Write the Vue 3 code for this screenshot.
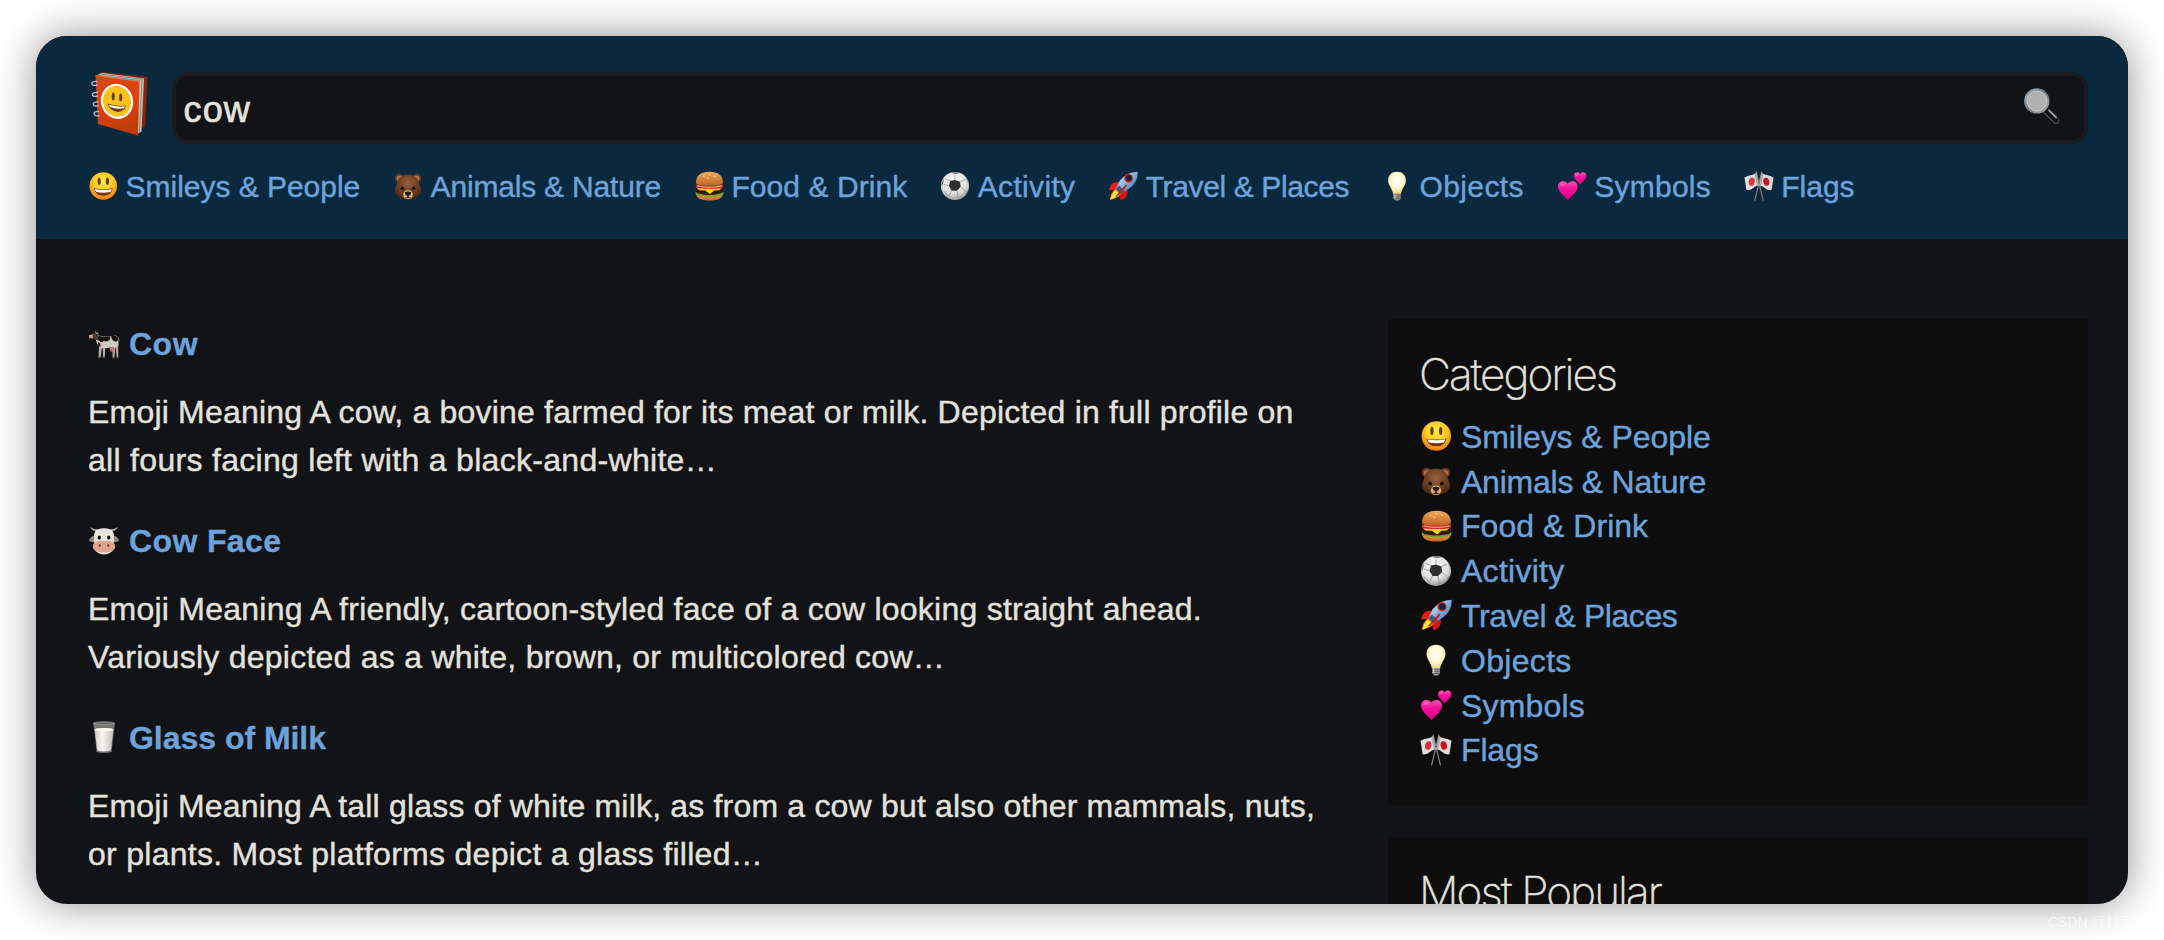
<script setup>
const categories = [
  { icon: 'smiley', label: 'Smileys & People', width: 234.6 },
  { icon: 'bear', label: 'Animals & Nature', width: 230.4 },
  { icon: 'burger', label: 'Food & Drink', width: 176 },
  { icon: 'ball', label: 'Activity', width: 97.6 },
  { icon: 'rocket', label: 'Travel & Places', width: 203.4 },
  { icon: 'bulb', label: 'Objects', width: 104.3 },
  { icon: 'hearts', label: 'Symbols', width: 116.7 },
  { icon: 'flags', label: 'Flags', width: 73.2 },
]

const results = [
  {
    icon: 'cow',
    title: 'Cow',
    width: 69,
    lines: [
      { text: 'Emoji Meaning A cow, a bovine farmed for its meat or milk. Depicted in full profile on', width: 1205.5 },
      { text: 'all fours facing left with a black-and-white…', width: 629 },
    ],
  },
  {
    icon: 'cowface',
    title: 'Cow Face',
    width: 152.4,
    lines: [
      { text: 'Emoji Meaning A friendly, cartoon-styled face of a cow looking straight ahead.', width: 1114 },
      { text: 'Variously depicted as a white, brown, or multicolored cow…', width: 857 },
    ],
  },
  {
    icon: 'milk',
    title: 'Glass of Milk',
    width: 197,
    lines: [
      { text: 'Emoji Meaning A tall glass of white milk, as from a cow but also other mammals, nuts,', width: 1227 },
      { text: 'or plants. Most platforms depict a glass filled…', width: 675 },
    ],
  },
]

// Tracks a line of text so that it takes exactly the given width.
const vFit = {
  mounted(el, { value }) {
    const natural = el.getBoundingClientRect().width
    el.style.letterSpacing = (value - natural) / el.textContent.length + 'px'
  },
}
</script>

<template>
  <div class="page">
    <svg class="sprite" aria-hidden="true">
      <defs>
        <radialGradient id="g-smile" cx=".5" cy=".35" r=".65">
          <stop offset="0" stop-color="#fff04a" />
          <stop offset=".55" stop-color="#fdc927" />
          <stop offset="1" stop-color="#ee7a0e" />
        </radialGradient>
        <radialGradient id="g-bear" cx=".5" cy=".35" r=".65">
          <stop offset="0" stop-color="#95603c" />
          <stop offset=".6" stop-color="#6c3f22" />
          <stop offset="1" stop-color="#48260f" />
        </radialGradient>
        <linearGradient id="g-bun" x1="0" y1="0" x2="0" y2="1">
          <stop offset="0" stop-color="#f5a95c" />
          <stop offset="1" stop-color="#bf6425" />
        </linearGradient>
        <radialGradient id="g-ball" cx=".45" cy=".3" r=".75">
          <stop offset="0" stop-color="#ffffff" />
          <stop offset=".65" stop-color="#dcdcdc" />
          <stop offset="1" stop-color="#8c8c8c" />
        </radialGradient>
        <linearGradient id="g-rocket" x1="0" y1="0" x2="1" y2="1">
          <stop offset="0" stop-color="#f3f8fc" />
          <stop offset=".5" stop-color="#7fb1df" />
          <stop offset="1" stop-color="#28588f" />
        </linearGradient>
        <radialGradient id="g-bulb" cx=".5" cy=".4" r=".6">
          <stop offset="0" stop-color="#ffffff" />
          <stop offset=".55" stop-color="#fff8d4" />
          <stop offset="1" stop-color="#ecd27c" />
        </radialGradient>
        <linearGradient id="g-heart" x1="0" y1="0" x2="0" y2="1">
          <stop offset="0" stop-color="#ff4db4" />
          <stop offset=".4" stop-color="#f5109a" />
          <stop offset="1" stop-color="#d8007e" />
        </linearGradient>
        <linearGradient id="g-milk" x1="0" y1="0" x2="1" y2="0">
          <stop offset="0" stop-color="#cfcbc1" />
          <stop offset=".4" stop-color="#f8f6f0" />
          <stop offset="1" stop-color="#c3beb2" />
        </linearGradient>
        <linearGradient id="g-cover" x1="0" y1="0" x2=".2" y2="1">
          <stop offset="0" stop-color="#d04a12" />
          <stop offset=".5" stop-color="#e0430a" />
          <stop offset="1" stop-color="#c03c07" />
        </linearGradient>
        <linearGradient id="g-rim" x1="0" y1="0" x2="1" y2="1">
          <stop offset="0" stop-color="#8fa9c4" />
          <stop offset=".5" stop-color="#777b80" />
          <stop offset="1" stop-color="#a9a9a9" />
        </linearGradient>
      </defs>

      <symbol id="smiley" viewBox="0 0 32 32">
        <circle cx="16.3" cy="16" r="14.7" fill="url(#g-smile)" />
        <ellipse cx="11.9" cy="11" rx="1.7" ry="4" fill="#6e3a0b" />
        <ellipse cx="20.7" cy="11" rx="1.7" ry="4" fill="#6e3a0b" />
        <path d="M6.3 18.4Q16.3 20.8 26.3 18.4Q25.3 26.3 16.3 26.3T6.3 18.4Z" fill="#70350c" />
        <path d="M7.3 19.2Q16.3 21.5 25.3 19.2Q24.8 21.6 23.8 22.4Q16.3 24 8.8 22.4Q7.7 21.4 7.3 19.2Z" fill="#fff" />
      </symbol>

      <symbol id="bear" viewBox="0 0 32 32">
        <circle cx="6.6" cy="7.6" r="4.8" fill="#6a3e24" />
        <circle cx="25.4" cy="7.6" r="4.8" fill="#6a3e24" />
        <circle cx="7" cy="8" r="3" fill="#b1735a" />
        <circle cx="25" cy="8" r="3" fill="#b1735a" />
        <path d="M16 3.6C23 3.6 27.6 8 28 14Q30.6 18 30 22Q29 27 22.5 28.5Q19 30.6 16 30.6T9.5 28.5Q3 27 2 22Q1.4 18 4 14C4.4 8 9 3.6 16 3.6Z" fill="url(#g-bear)" />
        <circle cx="10" cy="18.5" r="1.9" fill="#160d08" />
        <circle cx="22" cy="18.5" r="1.9" fill="#160d08" />
        <path d="M16 20.5Q20.7 20.5 21.2 25.3Q21 30 16 30T10.8 25.3Q11.3 20.5 16 20.5Z" fill="#dcad6c" />
        <path d="M12.4 22.8Q16 20.7 19.6 22.8Q19 25.7 16.7 26.3V27.5L20 29Q16 29 12 29L15.3 27.5V26.3Q13 25.7 12.4 22.8Z" fill="#15100d" />
      </symbol>

      <symbol id="burger" viewBox="0 0 32 32">
        <path d="M2.5 23.5H30.5Q31 31.5 16.5 31.5T2.5 23.5Z" fill="url(#g-bun)" />
        <path d="M1.5 22Q16.5 26 31.5 22L31 25.5Q27.5 27.5 25 26Q21.5 28.5 17.5 27Q13.5 28.5 10 26.3Q5.5 27.5 2 25Z" fill="#74a51c" />
        <path d="M2 18.5H31Q32 24.5 25.5 24.5Q16.5 26.5 7.5 24.5Q.5 24.5 2 18.5Z" fill="#34170c" />
        <path d="M2.5 17.5H30.5L26.5 20.5L21.5 20.8L17 24.5L12 20.8L5.5 20.5Z" fill="#ffd321" />
        <path d="M2 14.5H31Q31.8 18 28.5 18.4Q16.5 19.6 4.5 18.4Q1 18 2 14.5Z" fill="#d3281c" />
        <path d="M3.5 15.2Q16.5 18.4 29.5 15.2V16.5Q16.5 19 3.5 16.5Z" fill="#f4b0a0" />
        <path d="M2 12.5Q2.5 .8 16.5 .8T31 12.5Q31 15.3 16.5 15.5T2 12.5Z" fill="url(#g-bun)" />
        <g fill="#ffdba6">
          <ellipse cx="10.5" cy="5.5" rx="1" ry=".6" />
          <ellipse cx="16.5" cy="3.8" rx="1" ry=".6" />
          <ellipse cx="22" cy="5.5" rx="1" ry=".6" />
          <ellipse cx="14.5" cy="7.5" rx="1" ry=".6" />
        </g>
      </symbol>

      <symbol id="ball" viewBox="0 0 32 32">
        <circle cx="16" cy="16" r="15" fill="url(#g-ball)" />
        <path d="M11 10.5L16 9.5L21.5 11.5L22 17L18 21H12.5L9.500 16Z" fill="#2e2f31" />
        <path d="M12 1.6L17.5 1L21.5 2.2L17.5 3.2L13.5 2.6ZM1.2 13.5L3.5 9L4.3 8.5L3.2 13.5L1.6 17ZM28 7L31 14.5L29.7 12.5L27.8 8ZM30.2 20.5L27.5 25.5L26.3 26L28.4 21.5Z" fill="#77797c" />
        <path d="M16 9.5L15.8 4M21.5 11.5L27 9M22 17L27 21.5M18 21L19.5 29M12.5 21L9.5 27M9.5 16L4 14M11 10.5L5.5 8.5M9.5 27L4 21.5M24.5 26.5L19.5 29" fill="none" stroke="#8d8d8d" stroke-width=".8" />
      </symbol>

      <symbol id="rocket" viewBox="0 0 32 32">
        <path d="M1 20.5Q3 12.5 8 12L14 11.5L10 19.5Z" fill="#ec1e12" />
        <path d="M20 18L21 22Q21 29 14 31L12.5 30L13 23Z" fill="#d3150f" />
        <path d="M8 19L14 24.5Q12 28 2 31Q2.5 23 8 19Z" fill="#ff7a14" />
        <path d="M8 20.5L12 24.5Q9.5 28 2.5 30.5Q4 24 8 20.5Z" fill="#ffec3b" />
        <path d="M31.5 .8Q32.5 11 23.5 18L14 24.5L8.5 19L12.5 10.5Q19.5 1.5 31.5 .8Z" fill="url(#g-rocket)" />
        <path d="M8.5 19L12 15.5L17.5 21.5L14 24.5Z" fill="#315a89" />
        <path d="M19 14.5L7.5 27.5L9.5 27Q17 22 20.5 15Z" fill="#d2180f" />
        <circle cx="22" cy="7.8" r="4.6" fill="#d31d1c" />
        <circle cx="22.2" cy="7.5" r="3.2" fill="#162235" />
      </symbol>

      <symbol id="bulb" viewBox="0 0 32 32">
        <path d="M16 .8C21.8 .8 25.5 4.5 25.5 10C25.5 15 20.5 19.5 20.2 24.5H11.8C11.5 19.5 6.5 15 6.5 10C6.5 4.5 10.2 .8 16 .8Z" fill="url(#g-bulb)" />
        <path d="M12 24H20V29L18 31.5H14L12 29Z" fill="#9b9890" />
        <path d="M12 25.5H20M12 27.5H20M13 29.5H19" stroke="#595753" stroke-width=".8" />
        <path d="M13.8 24.3V29" stroke="#e2dfd6" stroke-width="1" />
      </symbol>

      <symbol id="hearts" viewBox="0 0 32 32">
        <path d="M11.500 31C7 26 1 22 1 16.5C1 10.5 8.5 9 11.5 13.5C14.5 9 22 10.500 22 16.5C22 22 16 26 11.5 31Z" fill="url(#g-heart)" />
        <path d="M24.8 14.5C22 11 18 8.8 18 5C18 1 23 .2 24.8 3.4C26.6 .2 31.3 1 31.3 5C31.3 8.8 27.5 11 24.8 14.5Z" fill="url(#g-heart)" />
        <ellipse cx="6" cy="14.5" rx="2.6" ry="1.5" fill="#ff8fd0" opacity=".5" />
        <ellipse cx="21" cy="3.8" rx="1.6" ry=".9" fill="#ff8fd0" opacity=".5" />
      </symbol>

      <symbol id="flags" viewBox="0 0 32 32">
        <path d="M13 .5L20.5 31.5M19 .5L11.5 31.5" stroke="#85837e" stroke-width="1.2" />
        <path d="M.5 6.8Q4 4.8 7 4.5T13.2 2L15.6 15.2Q12 15.8 9.5 18.3T2.6 20.3Z" fill="#e0dfdd" />
        <path d="M31.5 6.8Q28 4.8 25 4.5T18.8 2L16.4 15.2Q20 15.8 22.5 18.3T29.4 20.3Z" fill="#dcdbd9" />
        <path d="M13.2 2L15.6 15.2L13.8 15.8L11.2 3.5ZM18.8 2L16.4 15.2L18.2 15.8L20.8 3.5Z" fill="#9c9a97" opacity=".7" />
        <ellipse cx="8.2" cy="11.5" rx="3.1" ry="4.3" transform="rotate(14 8.2 11.5)" fill="#d8323a" />
        <ellipse cx="23.8" cy="11.5" rx="3.1" ry="4.3" transform="rotate(-14 23.8 11.5)" fill="#c4111f" />
      </symbol>

      <symbol id="cow" viewBox="0 0 32 32">
        <path d="M28.5 9Q31 9.5 30.8 14L30 20" fill="none" stroke="#6f6863" stroke-width="1" />
        <path d="M11 20L10.5 30.5H12.6L14 20ZM14.7 20L15 30.5H16.8L17.3 20ZM24.2 19L24.7 30.5H26.5L27.2 19ZM27.3 18L28.8 31H30.3L30.1 17Z" fill="#b5aea6" />
        <path d="M9 8Q18 11 28 8.5Q31 11 29.8 19Q27 21.5 24 20Q18 22 12.5 21Q8.5 17 7.5 11.5Z" fill="#cfc9c0" />
        <path d="M7.5 8Q17 11 22.5 9.5L22 12.5Q18 16 16 13.500Q13 17 11 13.5L8 12ZM23.5 9Q30 8 30 12.5Q29 16 26 14Q23 12.5 23.5 9ZM10 15Q13 16 12.5 20Q9.5 18.5 10 15Z" fill="#17130f" />
        <path d="M5.5 6L10.5 7.5L10 13.5L6.5 12L1.2 10.7L1 8.5Z" fill="#4a3d36" />
        <path d="M1 8.3L4.5 7.5L5 11.3L1.5 11Z" fill="#d1aca0" />
        <path d="M7 3.5Q6.3 5.5 8 6.5L10.5 7.5L10 5.5L8 5.5Z" fill="#b7a896" />
        <path d="M21.5 20H26L25.5 24Q23.5 25.5 22 23.5Z" fill="#c77472" />
        <path d="M10.5 29.5H12.8V31H10.2ZM14.8 29.5H16.9V31H14.6ZM24.5 30H26.7V31.5H24.3ZM28.6 30H30.4V31.5H28.4Z" fill="#5c5149" />
      </symbol>

      <symbol id="cowface" viewBox="0 0 32 32">
        <path d="M2.5 3Q4 7.6 10 7.3L12 5.5Q6 6 2.5 3ZM29.5 3Q28 7.6 22 7.3L20 5.5Q26 6 29.5 3Z" fill="#b9b5ad" />
        <path d="M7.5 11Q2.5 12 .8 16.8Q4 19 8.5 17.5ZM24.5 11Q29.5 12 31.2 16.8Q28 19 23.5 17.5Z" fill="#958c80" />
        <path d="M16 4.2Q24.5 3.8 26 10.5L25.8 19L24.5 27Q20.5 30.6 16 30.6T7.5 27L6.2 19L6 10.5Q7.5 3.8 16 4.2Z" fill="#e9e5da" />
        <path d="M16 17Q25.5 16 27.2 21.5Q27.7 27 21 27.7Q16 28.7 11 27.7Q4.3 27 4.8 21.5Q6.5 16 16 17Z" fill="#dfa58e" />
        <ellipse cx="11.3" cy="13.6" rx="1.7" ry="2.1" fill="#17130f" />
        <ellipse cx="20.7" cy="13.6" rx="1.7" ry="2.1" fill="#17130f" />
        <ellipse cx="11.8" cy="21.5" rx="1" ry="1.2" fill="#69372b" />
        <ellipse cx="20.2" cy="21.5" rx="1" ry="1.2" fill="#69372b" />
      </symbol>

      <symbol id="milk" viewBox="0 0 32 32">
        <path d="M5.3 2L8.7 31Q16 33 23.5 31L26.9 2Z" fill="#777673" />
        <path d="M6.8 8.5H25.3L22.8 29.5Q16 31.3 9.2 29.5Z" fill="url(#g-milk)" />
        <ellipse cx="16" cy="8.5" rx="9.3" ry="1.6" fill="#fffdf8" />
        <ellipse cx="16" cy="2.3" rx="10.8" ry="1.5" fill="#6a6a69" stroke="#a5a4a1" stroke-width=".7" />
      </symbol>
    </svg>

    <div class="window">
      <header class="header">
        <div class="top">
          <svg class="logo" viewBox="88 68 64 72" aria-label="Emojipedia">
            <path d="M97 74L103 72L147.5 77L145 127L141 128Z" fill="#8e2407" />
            <path d="M98 75L102 73L144 78.5L141.5 131.5L137 134Z" fill="#c4c3c1" />
            <path d="M99 75.5L140 80.5M101 74.2L143 79.3" stroke="#77706b" stroke-width=".7" />
            <path d="M142 80L139.5 132" stroke="#858585" stroke-width="1" />
            <path d="M95.5 75.5L139.5 81.5L138 135.5L98 124Z" fill="url(#g-cover)" />
            <path d="M95.5 75.5L139.5 81.5" stroke="#f26a34" stroke-width="1" />
            <ellipse cx="117" cy="101.3" rx="17.5" ry="19" fill="#ff2506" opacity=".55" />
            <ellipse cx="117" cy="101.3" rx="15" ry="16.6" transform="rotate(-15 117 101.3)" fill="#fbc21a" stroke="#fff" stroke-width="2.2" />
            <ellipse cx="113.2" cy="96.5" rx="1.5" ry="4" fill="#6b3910" />
            <ellipse cx="120.7" cy="97.5" rx="1.5" ry="4" fill="#6b3910" />
            <path d="M107.5 103.5Q116 107 126 105.5Q124.5 112 117.5 112Q109.5 111 107.5 103.5Z" fill="#70390d" />
            <path d="M108.5 104.5Q116 107.5 125 106.3L124 108.3Q116 109.5 110 107Z" fill="#fff" />
            <g fill="none" stroke="#b8b8dd" stroke-width="1.3">
              <path d="M97.5 81.5Q91.5 81 91.7 83.6T97.5 85" />
              <path d="M98 92.5Q92.2 92 92.4 94.6T98 96" />
              <path d="M98.5 102Q93 101.5 93.2 104.1T98.8 105.7" />
              <path d="M99 111.5Q93.8 111.2 94 113.7T99.5 116" />
            </g>
          </svg>
          <div class="search">
            <span v-fit="67.5" class="query">cow</span>
            <svg class="magnifier" viewBox="0 0 36 36">
              <path d="M22 22.5L32 32.5" stroke="#4a5056" stroke-width="6.8" stroke-linecap="round" />
              <path d="M22.5 22.5L32 32" stroke="#0b0c0e" stroke-width="5" stroke-linecap="round" />
              <path d="M25 22.5L32 29.5" stroke="#8e979d" stroke-width="1.8" stroke-linecap="round" />
              <circle cx="12.8" cy="12.9" r="11.6" fill="#b0b0b0" stroke="url(#g-rim)" stroke-width="2.2" />
              <circle cx="12.8" cy="12.9" r="10" fill="none" stroke="#d0d0d0" stroke-width=".8" />
            </svg>
          </div>
        </div>
        <nav class="nav">
          <a v-for="c in categories" :key="c.icon" class="nav-item">
            <svg class="icon icon-small"><use :href="'#' + c.icon" /></svg>
            <span v-fit="c.width">{{ c.label }}</span>
          </a>
        </nav>
      </header>

      <main class="main">
        <section class="results">
          <article v-for="r in results" :key="r.icon" class="result">
            <h2 class="result-title">
              <svg class="icon"><use :href="'#' + r.icon" /></svg>
              <span v-fit="r.width">{{ r.title }}</span>
            </h2>
            <p class="result-text">
              <span v-for="line in r.lines" :key="line.text" v-fit="line.width" class="line">{{ line.text }}</span>
            </p>
          </article>
        </section>

        <aside class="sidebar">
          <div class="panel">
            <h3 class="panel-title"><span v-fit="197">Categories</span></h3>
            <ul class="list">
              <li v-for="c in categories" :key="c.icon" class="list-item">
                <svg class="icon"><use :href="'#' + c.icon" /></svg>
                <span v-fit="c.width * 32 / 30 - 0.6">{{ c.label }}</span>
              </li>
            </ul>
          </div>
          <div class="panel">
            <h3 class="panel-title"><span v-fit="242">Most Popular</span></h3>
          </div>
        </aside>
      </main>
    </div>
    <div class="watermark">CSDN @村雨遥</div>
  </div>
</template>

<style>
body {
  background: #fff;
  overflow: hidden;
}
</style>

<style scoped>
.page {
  position: relative;
  box-sizing: border-box;
  width: 2164px;
  height: 940px;
  padding: 36px;
  overflow: hidden;
  background: #fff;
  font-family: "Liberation Sans", "Noto Sans CJK SC", sans-serif;
  font-size: 32px;
  color: #e4e2dc;
  white-space: nowrap;
}
.sprite {
  position: absolute;
  width: 0;
  height: 0;
}
.window {
  height: 868px;
  overflow: hidden;
  border-radius: 31px;
  background: #121317;
  box-shadow: 0 0 40px rgba(0, 0, 0, 0.43);
}
.header {
  box-sizing: border-box;
  height: 203px;
  padding: 36px 40px 0 52px;
  background: #0b293e;
}
.top {
  display: flex;
  gap: 20px;
  height: 72px;
}
.logo {
  flex: none;
  width: 64px;
  height: 72px;
  margin-top: -4px;
}
.search {
  box-sizing: border-box;
  display: flex;
  flex: 1;
  align-items: center;
  justify-content: space-between;
  padding: 0 24px 0 7.5px;
  border: 4px solid #1b1c20;
  border-radius: 16px;
  background: #121317;
  font-size: 36px;
}
.query {
  margin-top: 3px;
  -webkit-text-stroke: 0.7px currentColor;
}
.magnifier {
  width: 36px;
  height: 36px;
  margin-bottom: 4px;
}
.nav {
  display: flex;
  gap: 32.8px;
  margin-top: 21px;
  font-size: 30px;
  line-height: 44px;
  color: #6ca3dd;
  -webkit-text-stroke: 0.4px currentColor;
}
.nav-item {
  display: flex;
  align-items: center;
  gap: 7.6px;
}
.icon {
  flex: none;
  width: 32px;
  height: 32px;
  margin-bottom: 2px;
}
.icon-small {
  width: 30px;
  height: 30px;
}
.main {
  display: flex;
  justify-content: space-between;
  padding: 80px 40px 0 52px;
}
.results {
  display: flex;
  flex-direction: column;
  gap: 33px;
  padding-top: 1px;
}
.result-title {
  display: flex;
  align-items: center;
  gap: 9px;
  margin: 0 0 20px;
  font-size: 32px;
  font-weight: bold;
  line-height: 48px;
  color: #6ca3dd;
  -webkit-text-stroke: 0.3px currentColor;
}
.result-text {
  margin: 0;
  line-height: 48px;
  -webkit-text-stroke: 0.4px currentColor;
}
.line {
  display: block;
  width: fit-content;
}
.sidebar {
  display: flex;
  flex-direction: column;
  gap: 32px;
  width: 700px;
}
.panel {
  box-sizing: border-box;
  height: 486px;
  padding: 28px 32px 0 31px;
  background: #0d0d0d;
}
.panel-title {
  margin: 0 0 13.9px;
  font-family: Inter, "Liberation Sans", sans-serif;
  font-size: 44px;
  font-weight: 200;
  line-height: 54px;
  -webkit-text-stroke: 0.4px currentColor;
}
.list {
  margin: 0;
  padding: 0 0 0 1px;
  list-style: none;
  line-height: 44.8px;
  color: #6ca3dd;
  -webkit-text-stroke: 0.4px currentColor;
}
.list-item {
  display: flex;
  align-items: center;
  gap: 9px;
  height: 44.8px;
}
.watermark {
  position: absolute;
  left: 2048px;
  top: 912px;
  font-size: 14px;
  line-height: 20px;
  color: rgba(255, 255, 255, 0.65);
}
</style>
